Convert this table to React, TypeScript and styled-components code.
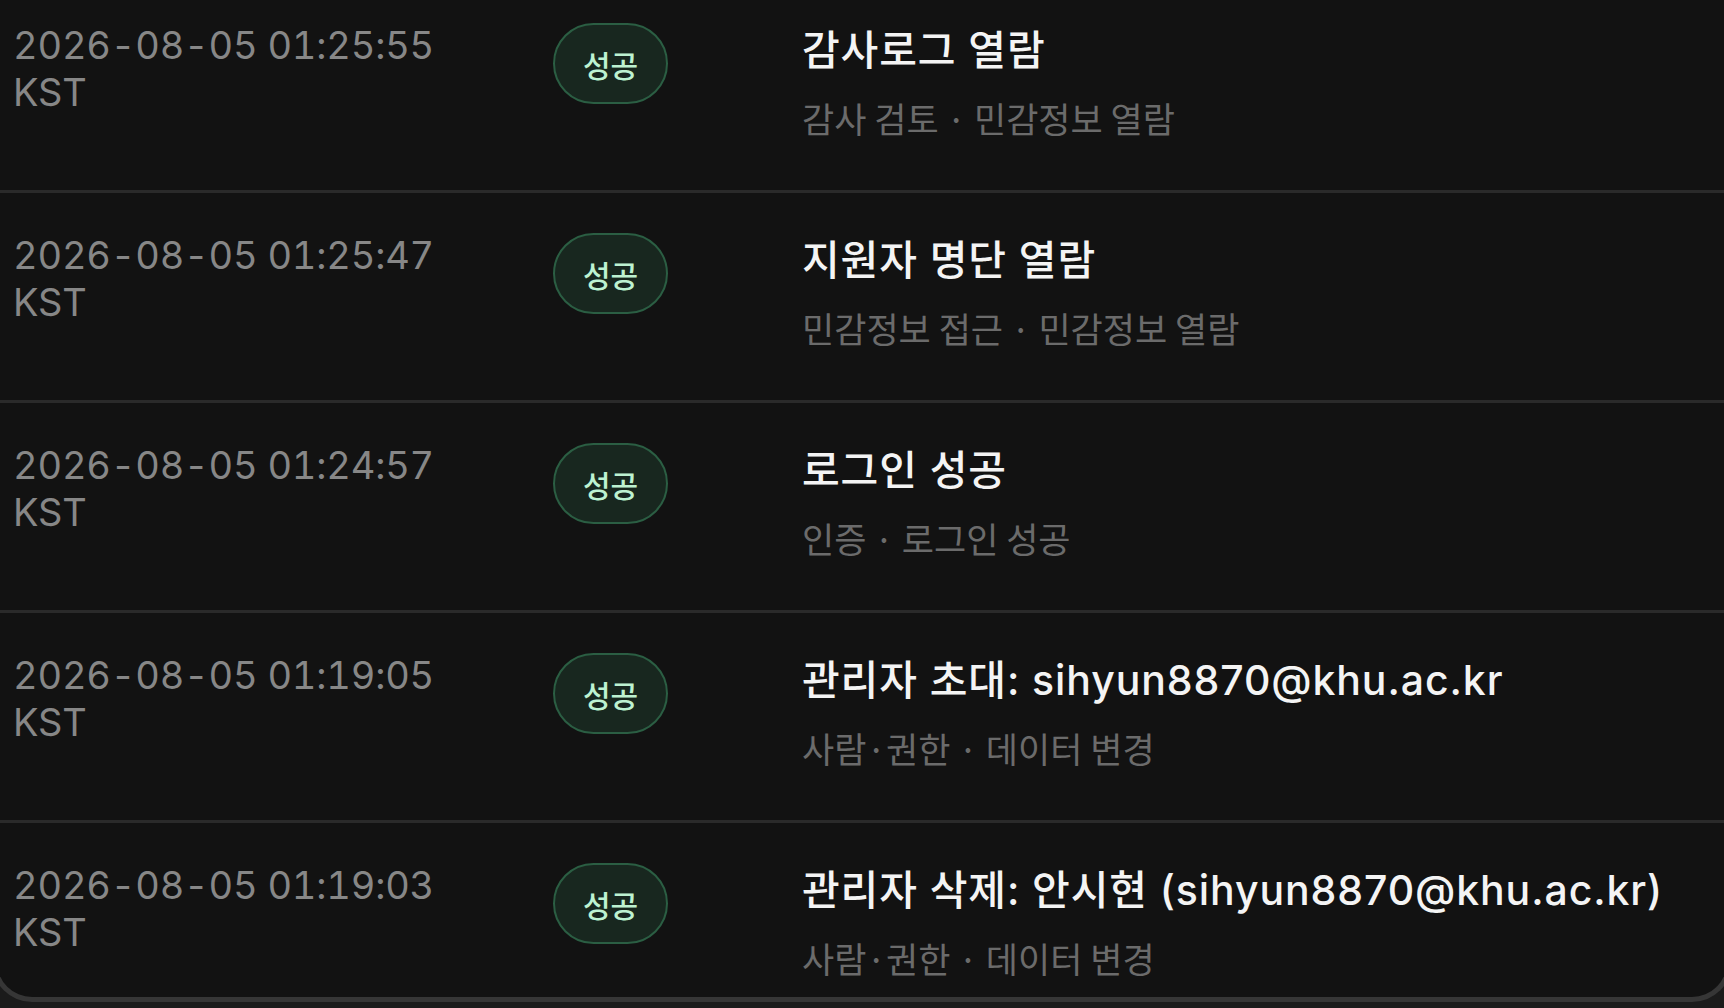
import React from "react";
import styled, { createGlobalStyle } from "styled-components";

const GlobalStyle = createGlobalStyle`
  html, body {
    margin: 0;
    padding: 0;
    background: #1b1b1b;
    overflow: hidden;
  }
  body {
    font-family: Inter, "Noto Sans CJK KR", sans-serif;
  }
`;

interface AuditEntry {
  time: string;
  status: string;
  title: string;
  category: string;
  action: string;
}

const entries: AuditEntry[] = [
  {
    time: "2026-08-05 01:25:55 KST",
    status: "성공",
    title: "감사로그 열람",
    category: "감사 검토",
    action: "민감정보 열람",
  },
  {
    time: "2026-08-05 01:25:47 KST",
    status: "성공",
    title: "지원자 명단 열람",
    category: "민감정보 접근",
    action: "민감정보 열람",
  },
  {
    time: "2026-08-05 01:24:57 KST",
    status: "성공",
    title: "로그인 성공",
    category: "인증",
    action: "로그인 성공",
  },
  {
    time: "2026-08-05 01:19:05 KST",
    status: "성공",
    title: "관리자 초대: sihyun8870@khu.ac.kr",
    category: "사람·권한",
    action: "데이터 변경",
  },
  {
    time: "2026-08-05 01:19:03 KST",
    status: "성공",
    title: "관리자 삭제: 안시현 (sihyun8870@khu.ac.kr)",
    category: "사람·권한",
    action: "데이터 변경",
  },
];

const App: React.FC = () => {
  return (
    <>
      <GlobalStyle />
      <LogCard>
        {entries.map((entry) => (
          <LogRow key={entry.time}>
            <Timestamp>{entry.time}</Timestamp>
            <StatusCell>
              <StatusBadge>{entry.status}</StatusBadge>
            </StatusCell>
            <EventInfo>
              <EventTitle>{entry.title}</EventTitle>
              <EventMeta>
                {entry.category} · {entry.action}
              </EventMeta>
            </EventInfo>
          </LogRow>
        ))}
      </LogCard>
    </>
  );
};

// list is scrolled a little, so the first row is cut at the top
const LogCard = styled.section`
  display: flex;
  flex-direction: column;
  height: 1014px;
  margin: -17px -8px 0 -8px;
  background: #121212;
  border: 5px solid #363636;
  border-top: none;
  border-radius: 0 0 40px 40px;
  overflow: hidden;
`;

const LogRow = styled.div`
  display: grid;
  grid-template-columns: 540px 249px 1fr;
  align-items: start;
  flex-shrink: 0;
  box-sizing: border-box;
  height: 210px;
  padding: 39px 0 0 16px;
  border-bottom: 3px solid #2a2a2a;
`;

const Timestamp = styled.div`
  width: 450px;
  font-family: Inter, sans-serif;
  font-size: 38px;
  line-height: 47px;
  letter-spacing: -0.2px;
  font-variant-numeric: tabular-nums;
  color: #878787;
`;

const StatusCell = styled.div`
  display: flex;
  padding-top: 1px;
`;

const StatusBadge = styled.span`
  display: inline-flex;
  align-items: center;
  justify-content: center;
  width: 115px;
  height: 81px;
  box-sizing: border-box;
  border: 2px solid #2b5e43;
  border-radius: 41px;
  background: #18271f;
  color: #bdf2d1;
  font-family: "Noto Sans CJK KR", sans-serif;
  font-size: 30px;
  font-weight: 500;
`;

const EventInfo = styled.div`
  display: flex;
  flex-direction: column;
  gap: 16px;
`;

const EventTitle = styled.div`
  font-family: Inter, "Noto Sans CJK KR", sans-serif;
  font-size: 41px;
  font-weight: 500;
  line-height: 56px;
  letter-spacing: 0.9px;
  color: #f4f4f4;
  white-space: nowrap;
`;

const EventMeta = styled.div`
  font-family: "Noto Sans CJK KR", sans-serif;
  font-size: 35px;
  line-height: 48px;
  color: #6b6b6b;
  white-space: nowrap;
`;

export default App;
